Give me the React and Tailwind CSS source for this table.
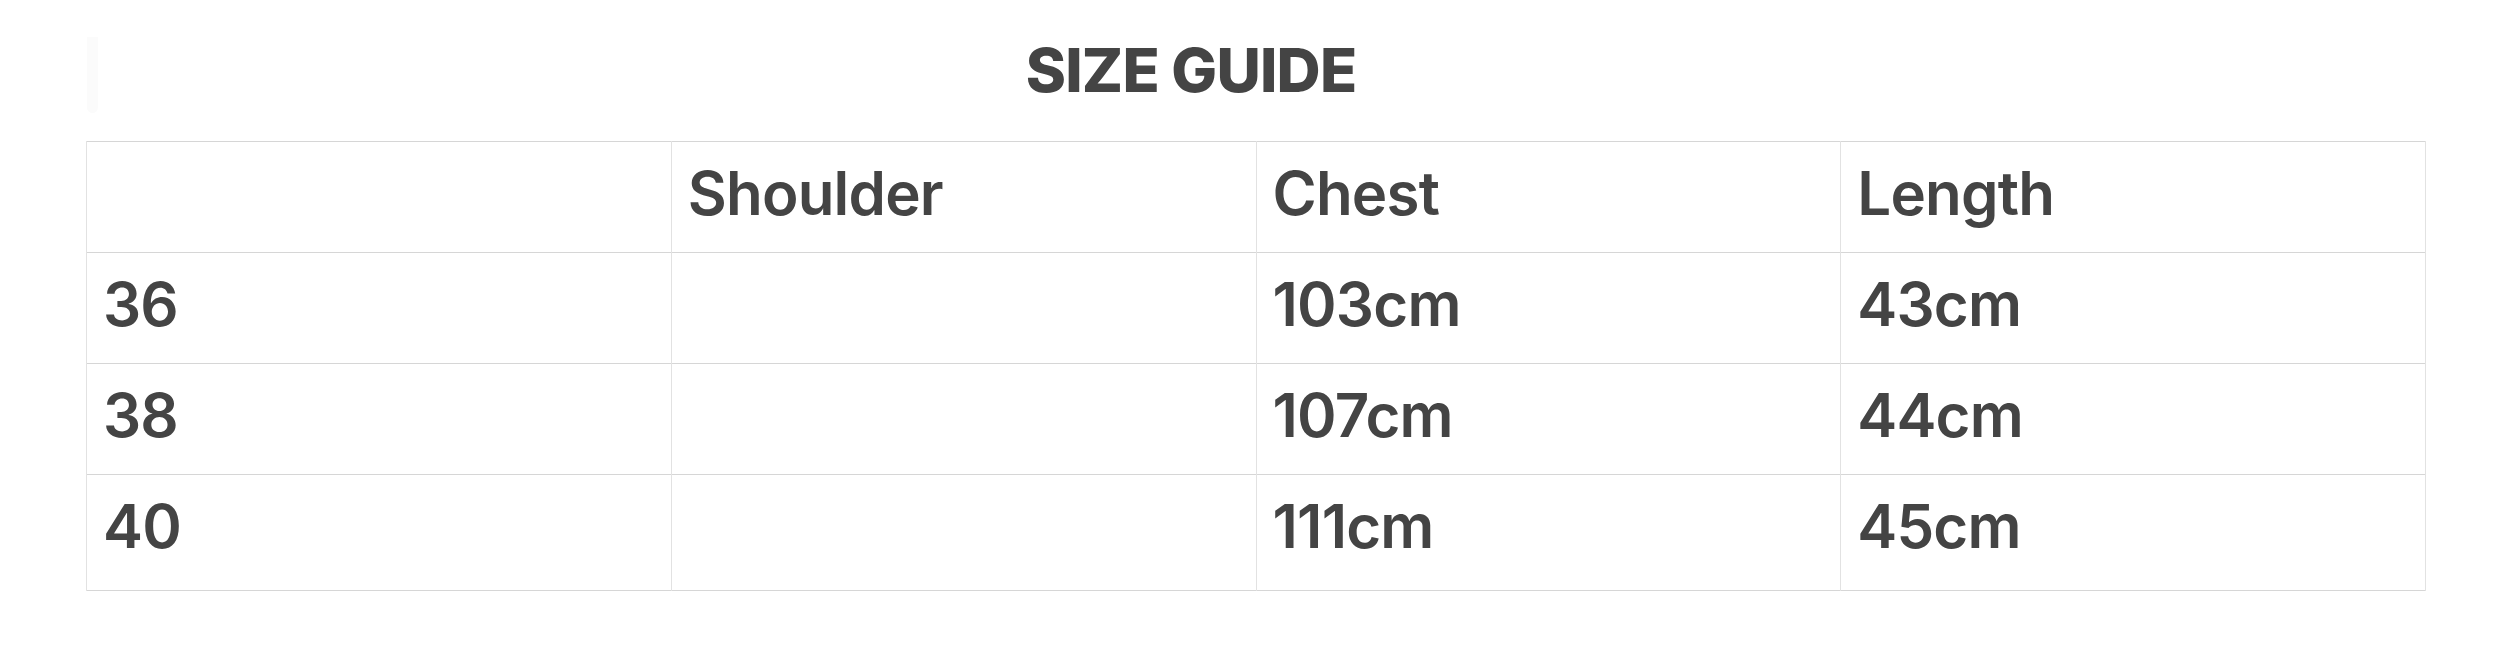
import React from 'react'

const HEAD = ['', 'Shoulder', 'Chest', 'Length']
const ROWS = [
  ['36', '', '103cm', '43cm'],
  ['38', '', '107cm', '44cm'],
  ['40', '', '111cm', '45cm'],
]

export default function App() {
  return (
    <div className="w-[2507px] h-[650px] bg-white text-[#444444] font-['Inter',sans-serif]">
      {/* Title */}
      <div className="relative h-[141px] ml-[86px] w-[2340px]">
        <div className="absolute left-[1px] top-[37px] w-[11px] h-[76px] rounded-b-full bg-[#fbfbfb]" />
        <h2 className="pt-[34px] pr-[130px] text-center text-[61px] leading-[72px] font-extrabold tracking-[-0.8px]">
          SIZE GUIDE
        </h2>
      </div>

      {/* Table */}
      <table className="ml-[86px] w-[2340px] table-fixed border-collapse text-[60px] font-semibold tracking-[-0.8px]">
        <thead>
          <tr className="h-[111px] border-y border-[#d6d6d6]">
            {HEAD.map((h, i) => (
              <th
                key={i}
                className="border-x border-[#e2e2e2] px-[16px] pb-[8px] text-left align-middle font-semibold"
              >
                {h}
              </th>
            ))}
          </tr>
        </thead>
        <tbody>
          {ROWS.map((row, r) => (
            <tr
              key={r}
              className={
                r === ROWS.length - 1
                  ? 'h-[116px] border-y border-[#d6d6d6]'
                  : 'h-[111px] border-y border-[#d6d6d6]'
              }
            >
              {row.map((c, i) => (
                <td
                  key={i}
                  className={
                    r === ROWS.length - 1
                      ? 'border-x border-[#e2e2e2] px-[16px] pb-[14px] align-middle'
                      : 'border-x border-[#e2e2e2] px-[16px] pb-[8px] align-middle'
                  }
                >
                  {c}
                </td>
              ))}
            </tr>
          ))}
        </tbody>
      </table>
    </div>
  )
}
